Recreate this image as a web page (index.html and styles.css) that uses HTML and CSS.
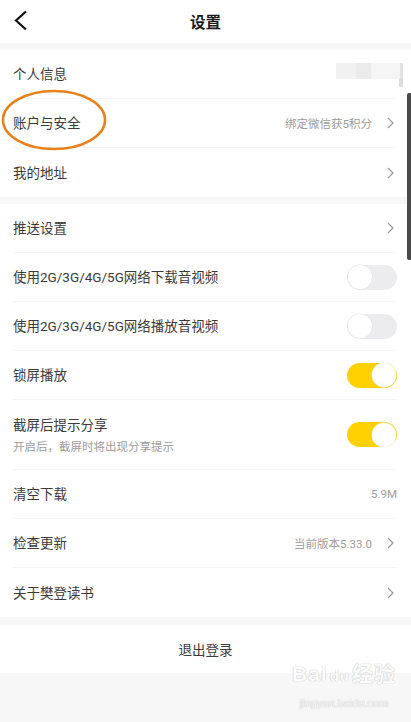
FILE: index.html
```html
<!DOCTYPE html>
<html lang="zh-CN">
<head>
  <meta charset="UTF-8">
  <title>设置</title>
  <link rel="stylesheet" href="styles.css">
</head>
<body>
  <header class="topbar">
    <svg class="back" width="14" height="21" viewBox="0 0 14 21">
      <polyline points="12,1.5 2,10.5 12,19.5" fill="none" stroke="#111" stroke-width="2.2" stroke-linejoin="miter"/>
    </svg>
    <h1>设置</h1>
  </header>

  <section class="group">
    <div class="row">
      <span class="label">个人信息</span>
      <span class="blur"></span>
    </div>
    <div class="row">
      <span class="label">账户与安全</span>
      <span class="extra">绑定微信获5积分</span>
      <svg class="arrow" width="7" height="12" viewBox="0 0 7 12"><polyline points="1,1 6,6 1,11" fill="none" stroke="#9a9a9a" stroke-width="1.2"/></svg>
    </div>
    <div class="row">
      <span class="label">我的地址</span>
      <svg class="arrow" width="7" height="12" viewBox="0 0 7 12"><polyline points="1,1 6,6 1,11" fill="none" stroke="#9a9a9a" stroke-width="1.2"/></svg>
    </div>
  </section>

  <section class="group">
    <div class="row">
      <span class="label">推送设置</span>
      <svg class="arrow" width="7" height="12" viewBox="0 0 7 12"><polyline points="1,1 6,6 1,11" fill="none" stroke="#9a9a9a" stroke-width="1.2"/></svg>
    </div>
    <div class="row">
      <span class="label">使用2G/3G/4G/5G网络下载音视频</span>
      <span class="switch"></span>
    </div>
    <div class="row">
      <span class="label">使用2G/3G/4G/5G网络播放音视频</span>
      <span class="switch"></span>
    </div>
    <div class="row">
      <span class="label">锁屏播放</span>
      <span class="switch on"></span>
    </div>
    <div class="row tall">
      <div class="stack">
        <span class="label">截屏后提示分享</span>
        <span class="hint">开启后，截屏时将出现分享提示</span>
      </div>
      <span class="switch on"></span>
    </div>
    <div class="row">
      <span class="label">清空下载</span>
      <span class="extra last">5.9M</span>
    </div>
    <div class="row">
      <span class="label">检查更新</span>
      <span class="extra">当前版本5.33.0</span>
      <svg class="arrow" width="7" height="12" viewBox="0 0 7 12"><polyline points="1,1 6,6 1,11" fill="none" stroke="#9a9a9a" stroke-width="1.2"/></svg>
    </div>
    <div class="row">
      <span class="label">关于樊登读书</span>
      <svg class="arrow" width="7" height="12" viewBox="0 0 7 12"><polyline points="1,1 6,6 1,11" fill="none" stroke="#9a9a9a" stroke-width="1.2"/></svg>
    </div>
  </section>

  <div class="group logout">退出登录</div>

  <!-- overlays: annotation circle, scroll indicator, watermark -->
  <svg class="circle" width="110" height="66" viewBox="0 0 110 66">
    <ellipse cx="54" cy="32" rx="51" ry="29" fill="none" stroke="#e8801c" stroke-width="2.6"/>
  </svg>
  <div class="scrollbar"></div>
  <div class="watermark">
    <div class="wm-logo">Bai<span class="paw">du</span>经验</div>
    <div class="wm-url">jingyan.baidu.com</div>
  </div>
</body>
</html>
```

FILE: styles.css
```css
* {
  margin: 0;
  padding: 0;
  box-sizing: border-box;
}

body {
  font-family: Roboto, "Noto Sans CJK SC", sans-serif;
  font-size: 13.5px;
  color: #3a3a3a;
  background: #f7f7f7;
  width: 411px;
  min-height: 722px;
  position: relative;
  overflow: hidden;
}

.topbar {
  height: 43px;
  background: white;
  display: flex;
  align-items: center;
  justify-content: center;
  position: relative;
}

.topbar h1 {
  font-size: 15.5px;
  font-weight: 700;
  color: #1a1a1a;
  margin-top: -2px;
}

.back {
  position: absolute;
  left: 14px;
  top: 10px;
}

.group {
  background: white;
  margin-top: 7px;
}

.row {
  height: 49px;
  margin: 0 14px 0 13px;
  display: flex;
  align-items: center;
  border-bottom: 1px solid #f5f5f5;
}

.row:last-child {
  border-bottom: none;
}

.row.tall {
  height: 70px;
}

.label {
  flex: 1;
  line-height: 20px;
}

.stack {
  flex: 1;
  display: flex;
  flex-direction: column;
}

.hint {
  font-size: 11.5px;
  color: #9c9c9c;
  line-height: 16px;
  margin-top: 4px;
}

.extra {
  font-size: 11.5px;
  color: #9c9c9c;
  margin-right: 15px;
}

.extra.last {
  margin-right: 0;
}

.arrow {
  margin-right: 3px;
}

.blur {
  width: 67px;
  height: 16px;
  margin-top: -7px;
  margin-right: -6px;
  background: linear-gradient(90deg, #f1f1f1 0 30%, #ebebeb 30% 52%, #f5f5f5 52% 95%, #e2e2e2 95%);
  position: relative;
}

.blur::after {
  content: "";
  position: absolute;
  right: 0;
  top: 16px;
  width: 4px;
  height: 8px;
  background: #dcdcdc;
}

.switch {
  width: 50px;
  height: 25px;
  border-radius: 13px;
  background: #ececee;
  position: relative;
}

.switch::after {
  content: "";
  position: absolute;
  left: 1px;
  top: 0.5px;
  width: 24px;
  height: 24px;
  border-radius: 50%;
  background: white;
  box-shadow: 0 0 0 0.5px #e2e2e2;
}

.switch.on {
  background: #ffd100;
}

.switch.on::after {
  left: 25px;
  box-shadow: 0 0 0 0.5px #f0e6c8;
}

.logout {
  height: 48px;
  margin-top: 8px;
  display: flex;
  align-items: center;
  justify-content: center;
}

.circle {
  position: absolute;
  left: 0;
  top: 88px;
}

.scrollbar {
  position: absolute;
  right: 0;
  top: 93px;
  width: 4px;
  height: 167px;
  background: #4a4a4a;
  border-radius: 2px 0 0 2px;
}

.watermark {
  position: absolute;
  left: 292px;
  top: 660px;
  font-family: "Liberation Sans", "Noto Sans CJK SC", sans-serif;
  color: rgba(255, 255, 255, 0.95);
  text-shadow: 0 0 1px #c4c4c4, 0 0 1px #c4c4c4;
  text-align: center;
}

.wm-logo {
  font-size: 21px;
  font-weight: 700;
  line-height: 28px;
  letter-spacing: 1px;
}

.paw {
  font-size: 15px;
  margin: 0 2px;
}

.wm-url {
  font-size: 11px;
  line-height: 14px;
  margin-top: 6px;
}
```
